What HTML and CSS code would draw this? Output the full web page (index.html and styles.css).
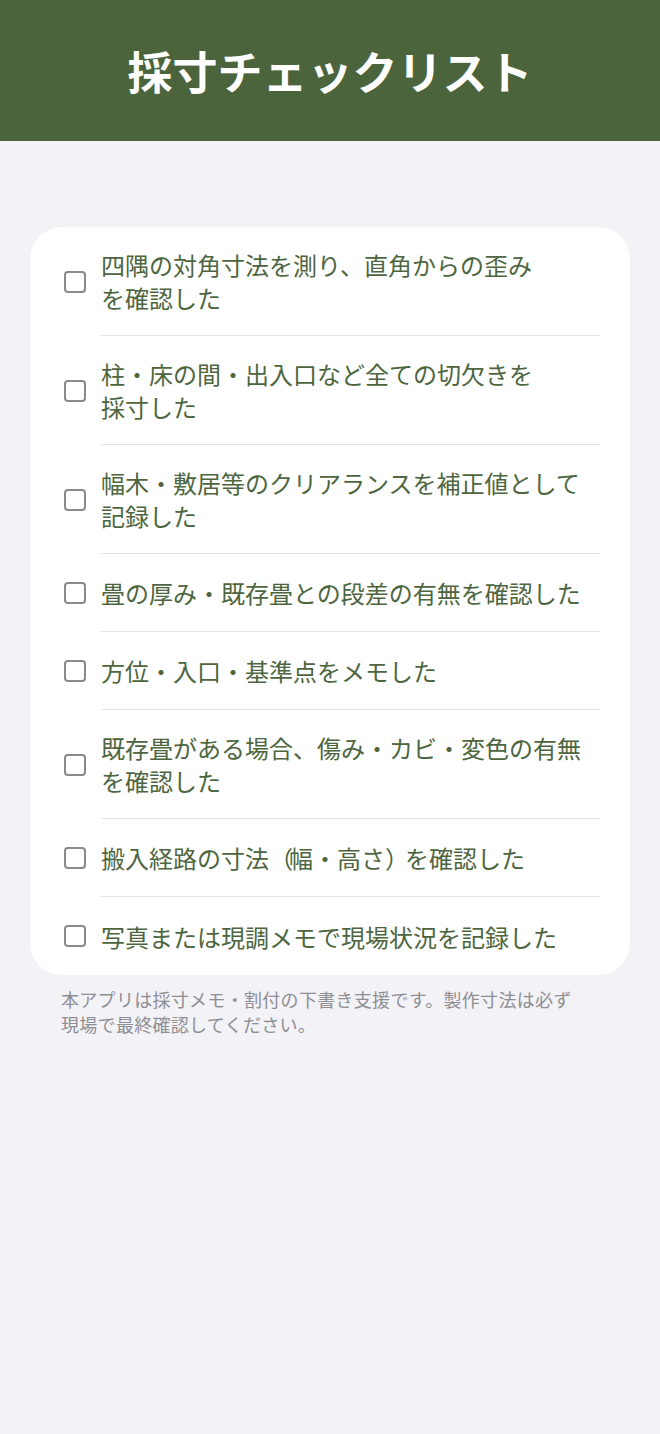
FILE: index.html
```html
<!DOCTYPE html>
<html lang="ja">
<head>
<meta charset="utf-8">
<title>採寸チェックリスト</title>
<link rel="stylesheet" href="styles.css">
</head>
<body>
<header class="header">
  <h1 class="title">採寸チェックリスト</h1>
</header>
<main class="main">
  <ul class="card">
    <li class="item"><span class="box"></span><div class="text"><span class="label">四隅の対角寸法を測り、直角からの歪み<br>を確認した</span></div></li>
    <li class="item"><span class="box"></span><div class="text"><span class="label">柱・床の間・出入口など全ての切欠きを<br>採寸した</span></div></li>
    <li class="item"><span class="box"></span><div class="text"><span class="label">幅木・敷居等のクリアランスを補正値として<br>記録した</span></div></li>
    <li class="item"><span class="box"></span><div class="text"><span class="label">畳の厚み・既存畳との段差の有無を確認した</span></div></li>
    <li class="item"><span class="box"></span><div class="text"><span class="label">方位・入口・基準点をメモした</span></div></li>
    <li class="item"><span class="box"></span><div class="text"><span class="label">既存畳がある場合、傷み・カビ・変色の有無<br>を確認した</span></div></li>
    <li class="item"><span class="box"></span><div class="text"><span class="label">搬入経路の寸法<span class="paren">（</span>幅・高さ<span class="paren">）</span>を確認した</span></div></li>
    <li class="item last"><span class="box"></span><div class="text"><span class="label">写真または現調メモで現場状況を記録した</span></div></li>
  </ul>
  <p class="note">本アプリは採寸メモ・割付の下書き支援です。製作寸法は必ず<br>現場で最終確認してください。</p>
</main>
</body>
</html>
```

FILE: styles.css
```css
* { box-sizing: border-box; }
html, body {
  margin: 0;
  padding: 0;
  background: #f2f2f7;
  font-family: "Noto Sans CJK JP", "Noto Sans", sans-serif;
}
.header {
  height: 141px;
  background: #4b643b;
  display: flex;
  align-items: center;
  justify-content: center;
}
.title {
  margin: 0;
  color: #ffffff;
  font-size: 45px;
  font-weight: 700;
  line-height: 1;
}
.main {
  padding: 86px 30px 0;
}
.card {
  list-style: none;
  margin: 0;
  padding: 0 30px 0 34px;
  background: #ffffff;
  border-radius: 32px;
}
.item {
  display: flex;
  align-items: center;
}
.box {
  flex: none;
  width: 22px;
  height: 22px;
  border: 2px solid #8a8a8c;
  border-radius: 4px;
  background: #fff;
  margin-right: 15px;
}
.text {
  flex: 1;
  min-height: 78px;
  padding: 21px 0;
  border-bottom: 1px solid #e3e3e6;
  display: flex;
  align-items: center;
}
.label {
  display: block;
  color: #4d6640;
  font-size: 24px;
  line-height: 33px;
}
.paren {
  letter-spacing: -4px;
}
.item.last .text { border-bottom: none; }
.note {
  margin: 12px 0 0 31px;
  color: #8e8e93;
  font-size: 18px;
  line-height: 25px;
  letter-spacing: 0.3px;
}
```
